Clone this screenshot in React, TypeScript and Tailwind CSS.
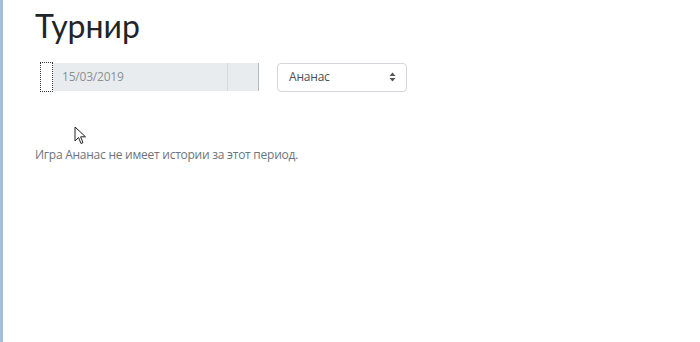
export default function App() {
  return (
    <div className="relative h-[342px] w-[700px] overflow-hidden bg-white border-l-[3px] border-[#a7c0da] font-['Open_Sans',sans-serif]">
      <div className="pl-[32px] pt-[4px]">
        <h1 className="font-['Lato','Open_Sans',sans-serif] text-[32px] leading-[44px] text-[#212529]">Турнир</h1>
        <div className="mt-[14px] flex items-center">
          <div className="ml-[5px] h-[30px] w-[13px] border border-dotted border-[#333]" />
          <div className="flex h-[28px] w-[206px] bg-[#e9ecef] border-r border-[#b5b9bd]">
            <div className="flex w-[175px] items-center border-r border-[#d6d9dc] pl-[9px] text-[12px] tracking-[-0.2px] text-[#8a9096]">
              15/03/2019
            </div>
            <div className="flex-1" />
          </div>
          <div className="ml-[18px] flex h-[29px] w-[130px] items-center justify-between rounded-[4px] border border-[#d3d7db] pl-[11px] pr-[10px] text-[12px] tracking-[-0.2px] text-[#495057]">
            <span>Ананас</span>
            <svg width="7" height="10" viewBox="0 0 7 10">
              <path d="M3.5 0.5 L6.5 4 H0.5 Z" fill="#555" />
              <path d="M3.5 9.5 L6.5 6 H0.5 Z" fill="#555" />
            </svg>
          </div>
        </div>
        <p className="mt-[54px] text-[12px] tracking-[-0.25px] text-[#6c757d]">Игра Ананас не имеет истории за этот период.</p>
      </div>
      <svg className="absolute left-[71px] top-[126px]" width="13" height="19" viewBox="0 0 13 19">
        <path d="M1 1 L1 15 L4.5 11.5 L7 17.5 L9 16.6 L6.6 10.8 L11.5 10.8 Z" fill="#fff" stroke="#222" strokeWidth="1" strokeLinejoin="round" />
      </svg>
    </div>
  );
}
